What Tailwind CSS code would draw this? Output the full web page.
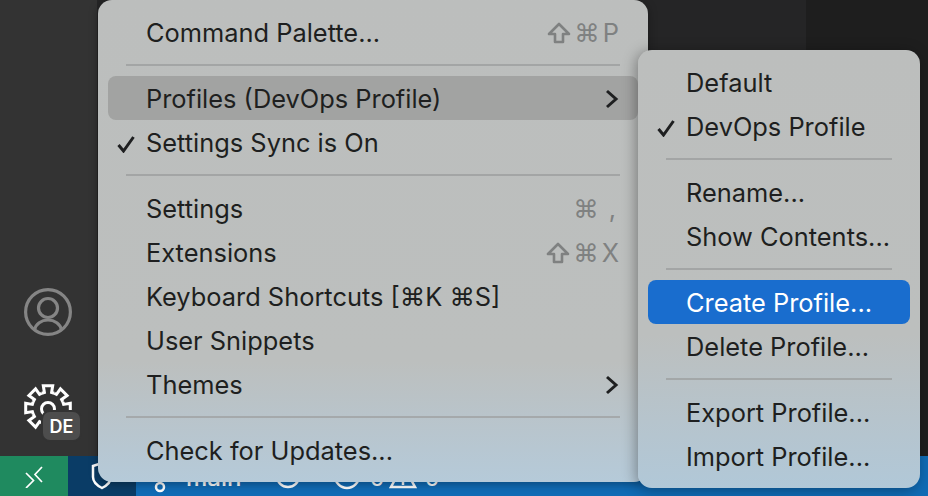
<!DOCTYPE html>
<html>
<head>
<meta charset="utf-8">
<script src="https://cdn.jsdelivr.net/npm/@tailwindcss/browser@4"></script>
</head>
<body class="m-0 overflow-hidden bg-[#252526] font-['Inter','Liberation_Sans',sans-serif]">
<div class="relative flex h-[496px] w-[928px] flex-col overflow-hidden">
  <div class="flex h-[456px] w-full">
    <div class="flex w-[97px] flex-col items-start bg-[#333333] pl-[24px]">
      <svg class="mt-[288px]" width="48" height="48" viewBox="0 0 48 48" fill="none" stroke="#858585" stroke-width="3.200"><circle cx="24" cy="24" r="22.400"/><circle cx="24" cy="20" r="9.500"/><path d="M10.500 42c1-6 7-10 13.500-10s12.500 4 13.500 10"/></svg>
      <div class="relative mt-[48px] h-[48px] w-[48px]">
        <svg width="48" height="48" viewBox="0 0 48 48" fill="none" stroke="#ffffff" stroke-width="3" stroke-linejoin="miter">
          <path d="M17.900 9.200L20.400 8.400L19.300 1.700H28.700L27.600 8.400L30.100 9.200"/>
          <path transform="rotate(45 24 24)" d="M17.900 9.200L20.400 8.400L19.300 1.700H28.700L27.600 8.400L30.100 9.200"/>
          <path transform="rotate(90 24 24)" d="M17.900 9.200L20.400 8.400L19.300 1.700H28.700L27.600 8.400L30.100 9.200"/>
          <path transform="rotate(135 24 24)" d="M17.900 9.200L20.400 8.400L19.300 1.700H28.700L27.600 8.400L30.100 9.200"/>
          <path transform="rotate(180 24 24)" d="M17.900 9.200L20.400 8.400L19.300 1.700H28.700L27.600 8.400L30.100 9.200"/>
          <path transform="rotate(225 24 24)" d="M17.900 9.200L20.400 8.400L19.300 1.700H28.700L27.600 8.400L30.100 9.200"/>
          <path transform="rotate(270 24 24)" d="M17.900 9.200L20.400 8.400L19.300 1.700H28.700L27.600 8.400L30.100 9.200"/>
          <path transform="rotate(315 24 24)" d="M17.900 9.200L20.400 8.400L19.300 1.700H28.700L27.600 8.400L30.100 9.200"/>
          <circle cx="24" cy="25" r="6.500"/>
        </svg>
        <div class="absolute left-[19px] top-[28px] flex h-[28px] w-[37px] items-center justify-center rounded-[7px] bg-[#4d4d4d] text-[18px] font-semibold text-white ring-[2px] ring-[#333333]">DE</div>
      </div>
    </div>
    <div class="w-[709px] bg-[#252526]"></div>
    <div class="flex-1 bg-[#1e1e1e]"></div>
  </div>
  <div class="flex h-[40px] w-full items-center bg-[#106bb5] text-[24px] text-white">
    <div class="flex h-full w-[68px] items-center justify-center bg-[#1f8a5f]">
      <svg width="24" height="24" viewBox="0 0 24 24" fill="none" stroke="#ffffff" stroke-width="1.700"><path d="M4 9l7.500 7.500L4 24M20 3l-7 7.500 7 7.500"/></svg>
    </div>
    <div class="flex h-full w-[68px] items-center justify-center bg-[#0a3c66]">
      <svg width="24" height="28" viewBox="0 0 24 28" fill="none" stroke="#ffffff" stroke-width="2.500"><path d="M3 4l9-3 9 3v11c0 6-5 9-9 11-4-2-9-5-9-11z"/></svg>
    </div>
    <svg class="ml-[12px]" width="24" height="36" viewBox="0 0 24 36" fill="none" stroke="#ffffff" stroke-width="2.500"><path d="M12 4v21"/><circle cx="12" cy="29" r="4"/></svg>
    <span class="ml-[14px] pt-[4px] font-medium">main</span>
    <svg class="ml-[33px]" width="28" height="28" viewBox="0 0 28 28" fill="none" stroke="#ffffff" stroke-width="2.500"><circle cx="14" cy="14" r="11"/></svg>
    <svg class="ml-[31px]" width="28" height="28" viewBox="0 0 28 28" fill="none" stroke="#ffffff" stroke-width="2.500"><circle cx="14" cy="14" r="12"/><path d="M9 9l10 10M19 9L9 19"/></svg>
    <span class="ml-[8px] pt-[4px]">0</span>
    <svg class="ml-[4px]" width="28" height="28" viewBox="0 0 28 28" fill="none" stroke="#ffffff" stroke-width="2.500"><path d="M14 3l12 22H2z"/><path d="M14 10v8M14 20v3"/></svg>
    <span class="ml-[8px] pt-[4px]">0</span>
  </div>

  <div class="absolute left-[98px] top-0 flex h-[482px] w-[550px] flex-col rounded-[14px] bg-linear-to-b from-[#bcbebd] via-[#bcbfbe] via-75% to-[#b5cad9] pb-[10px] pt-[10px] text-[25.4px] text-[#1e1f20] shadow-[0_2px_10px_rgba(0,0,0,0.35)]">
    <div class="flex h-[44px] items-center pl-[48px] pr-[29px]"><span class="flex-1 pt-[2px]">Command Palette...</span><span class="flex items-center gap-[3px] pt-[2px] text-[#7f8181]"><svg width="24" height="22" viewBox="0 0 24 22" fill="none" stroke="#7f8181" stroke-width="2.600" stroke-linejoin="round"><path d="M12 2L2 12h6v8h8v-8h6z"/></svg><span>⌘</span><span>P</span></span></div>
    <div class="flex h-[22px] items-center px-[28px]"><div class="h-[2px] w-full bg-[#a3a5a5]"></div></div>
    <div class="mx-[10px] flex h-[44px] items-center rounded-[8px] bg-[#a2a3a2] pl-[38px] pr-[19px]"><span class="flex-1 pt-[2px]">Profiles (DevOps Profile)</span><svg class="mt-[1px]" width="14" height="20" viewBox="0 0 14 20" fill="none" stroke="#1e1f20" stroke-width="3"><path d="M2 2l9 8-9 8"/></svg></div>
    <div class="relative flex h-[44px] items-center pl-[48px] pr-[29px]"><svg class="absolute left-[19px] mt-[3px]" width="18" height="18" viewBox="0 0 18 18" fill="none" stroke="#1e1f20" stroke-width="3"><path d="M1.500 10l5 6L16.500 2"/></svg><span class="pt-[2px]">Settings Sync is On</span></div>
    <div class="flex h-[22px] items-center px-[28px]"><div class="h-[2px] w-full bg-[#a3a5a5]"></div></div>
    <div class="flex h-[44px] items-center pl-[48px] pr-[32px]"><span class="flex-1 pt-[2px]">Settings</span><span class="flex items-center gap-[10px] pt-[2px] text-[#7f8181]"><span>⌘</span><span>,</span></span></div>
    <div class="flex h-[44px] items-center pl-[48px] pr-[29px]"><span class="flex-1 pt-[2px]">Extensions</span><span class="flex items-center gap-[3px] pt-[2px] text-[#7f8181]"><svg width="24" height="22" viewBox="0 0 24 22" fill="none" stroke="#7f8181" stroke-width="2.600" stroke-linejoin="round"><path d="M12 2L2 12h6v8h8v-8h6z"/></svg><span>⌘</span><span>X</span></span></div>
    <div class="flex h-[44px] items-center pl-[48px] pr-[29px]"><span class="pt-[2px]">Keyboard Shortcuts [⌘K ⌘S]</span></div>
    <div class="flex h-[44px] items-center pl-[48px] pr-[29px]"><span class="pt-[2px]">User Snippets</span></div>
    <div class="flex h-[44px] items-center pl-[48px] pr-[29px]"><span class="flex-1 pt-[2px]">Themes</span><svg class="mt-[1px]" width="14" height="20" viewBox="0 0 14 20" fill="none" stroke="#1e1f20" stroke-width="3"><path d="M2 2l9 8-9 8"/></svg></div>
    <div class="flex h-[22px] items-center px-[28px]"><div class="h-[2px] w-full bg-[#a5a9ab]"></div></div>
    <div class="flex h-[44px] items-center pl-[48px] pr-[29px]"><span class="pt-[2px]">Check for Updates...</span></div>
  </div>

  <div class="absolute left-[638px] top-[50px] flex h-[438px] w-[282px] flex-col rounded-[14px] bg-linear-to-b from-[#bcbebd] via-[#bcbfbe] via-65% to-[#b1c8d8] pb-[10px] pt-[10px] text-[25.4px] text-[#1e1f20] shadow-[-2px_2px_14px_rgba(0,0,0,0.35)]">
    <div class="flex h-[44px] items-center pl-[48px]"><span class="pt-[2px]">Default</span></div>
    <div class="relative flex h-[44px] items-center pl-[48px]"><svg class="absolute left-[19px] mt-[3px]" width="18" height="18" viewBox="0 0 18 18" fill="none" stroke="#1e1f20" stroke-width="3"><path d="M1.500 10l5 6L16.500 2"/></svg><span class="pt-[2px]">DevOps Profile</span></div>
    <div class="flex h-[22px] items-center px-[28px]"><div class="h-[2px] w-full bg-[#a3a5a5]"></div></div>
    <div class="flex h-[44px] items-center pl-[48px]"><span class="pt-[2px]">Rename...</span></div>
    <div class="flex h-[44px] items-center pl-[48px]"><span class="pt-[2px]">Show Contents...</span></div>
    <div class="flex h-[22px] items-center px-[28px]"><div class="h-[2px] w-full bg-[#a3a5a5]"></div></div>
    <div class="mx-[10px] flex h-[44px] items-center rounded-[8px] bg-[#196dce] pl-[38px] text-white"><span class="pt-[2px]">Create Profile...</span></div>
    <div class="flex h-[44px] items-center pl-[48px]"><span class="pt-[2px]">Delete Profile...</span></div>
    <div class="flex h-[22px] items-center px-[28px]"><div class="h-[2px] w-full bg-[#a3a7a8]"></div></div>
    <div class="flex h-[44px] items-center pl-[48px]"><span class="pt-[2px]">Export Profile...</span></div>
    <div class="flex h-[44px] items-center pl-[48px]"><span class="pt-[2px]">Import Profile...</span></div>
  </div>
</div>
</body>
</html>
